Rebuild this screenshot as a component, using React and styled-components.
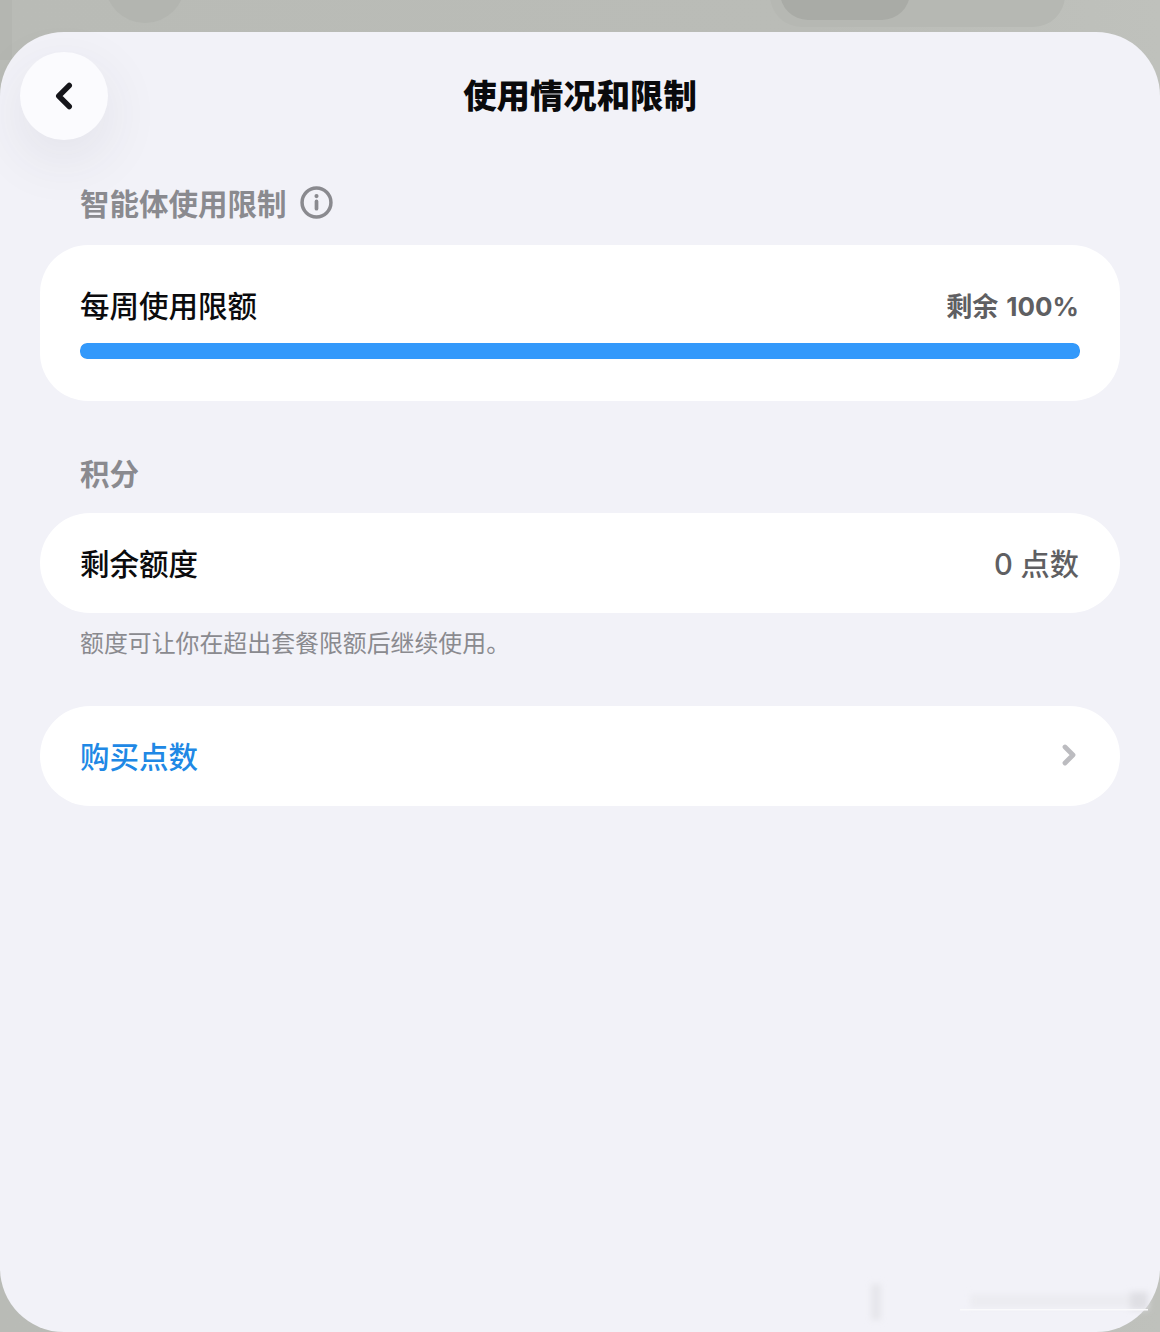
import React from "react";
import styled, { createGlobalStyle } from "styled-components";
import { ChevronLeft, ChevronRight } from "lucide-react";

const Global = createGlobalStyle`
  html, body { margin: 0; padding: 0; background: #bbbdb8; }
  * { box-sizing: border-box; }
  body { font-family: Inter, "Noto Sans CJK SC", sans-serif; }
`;

const Page = styled.div`
  position: relative;
  width: 1160px;
  height: 1332px;
  padding-top: 32px;
  overflow: hidden;
  background: linear-gradient(90deg, #b9bbb6 0%, #babcb7 70%, #bfc1bc 100%);
`;

const Backdrop = styled.svg`
  position: absolute;
  inset: 0 0 auto 0;
  width: 1160px;
  height: 60px;
`;

const Sheet = styled.main`
  position: relative;
  height: 1300px;
  background: #f2f2f8;
  border-radius: 64px;
  padding: 20px 40px 0 20px;
  display: flex;
  flex-direction: column;
`;

const Header = styled.header`
  display: grid;
  grid-template-columns: 88px 1fr 68px;
  align-items: center;
  height: 88px;
  margin-bottom: 42px;
`;

const BackButton = styled.button`
  width: 88px;
  height: 88px;
  padding: 0;
  border: 0;
  border-radius: 50%;
  background: #fbfbfe;
  color: #15151a;
  display: flex;
  align-items: center;
  justify-content: center;
  box-shadow: 0 18px 60px rgba(60, 60, 80, 0.09);
`;

const Title = styled.h1`
  margin: 0;
  text-align: center;
  font-size: 33.4px;
  line-height: 44px;
  font-weight: 800;
  color: #0a0a0c;
`;

const Content = styled.div`
  margin-left: 20px;
  display: flex;
  flex-direction: column;
`;

const SectionLabel = styled.div`
  display: flex;
  align-items: center;
  gap: 13px;
  height: 40px;
  padding-left: 40px;
  font-size: 29.5px;
  font-weight: 700;
  color: #8a8a8f;
  margin-bottom: ${(p) => p.$mb}px;
`;

const InfoIcon = styled.svg`
  width: 33px;
  height: 33px;
  flex: none;
`;

const Card = styled.section`
  background: #fff;
  border-radius: 48px;
`;

const UsageCard = styled(Card)`
  height: 156px;
  padding: 39px 40px 0;
  margin-bottom: 51px;
`;

const UsageHead = styled.div`
  display: flex;
  justify-content: space-between;
  align-items: center;
  height: 40px;
  margin-bottom: 19px;
`;

const RowLabel = styled.span`
  font-size: 29.5px;
  font-weight: 500;
  color: ${(p) => p.$c};
`;

const Remaining = styled.span`
  font-size: 26px;
  font-weight: 700;
  color: #5f5f62;
  word-spacing: 2px;
  margin-right: 1px;
`;

const Track = styled.div`
  height: 16px;
  border-radius: 7px;
  background: #e6e6ec;
  overflow: hidden;
`;

const Fill = styled.div`
  height: 100%;
  border-radius: 7px;
  background: #3399fb;
`;

const Row = styled(Card)`
  height: 100px;
  padding: 0 40px 2px;
  border-radius: 50px;
  display: flex;
  align-items: center;
  justify-content: space-between;
`;

const Points = styled.span`
  font-size: 29.2px;
  font-weight: 500;
  color: #5f5f62;
  margin-right: 1px;
`;

const Note = styled.p`
  margin: 14px 0 45px;
  padding-left: 40px;
  font-size: 23.9px;
  line-height: 34px;
  color: #8a8a8f;
`;

const Chevron = styled(ChevronRight)`
  margin-right: -5px;
  color: #bcbcc0;
`;

const ScreenFlaw = styled.svg`
  position: absolute;
  left: 0;
  top: 0;
  width: 1160px;
  height: 1300px;
  pointer-events: none;
`;

export default function App() {
  return (
    <Page>
      <Global />
      <Backdrop viewBox="0 0 1160 60">
        <rect x="-68" y="-60" width="80" height="160" rx="40" fill="#b4b6b1" />
        <rect x="105" y="-57" width="80" height="80" rx="40" fill="#b3b5b0" />
        <rect x="770" y="-40" width="295" height="67" rx="32" fill="#b6b8b3" />
        <rect x="780" y="-50" width="130" height="70" rx="28" fill="#a9aba6" />
      </Backdrop>
      <Sheet>
        <Header>
          <BackButton aria-label="返回">
            <ChevronLeft size={42} strokeWidth={3.1} />
          </BackButton>
          <Title>使用情况和限制</Title>
        </Header>
        <Content>
          <SectionLabel $mb={23}>
            智能体使用限制
            <InfoIcon viewBox="0 0 32 32" fill="none" stroke="currentColor" strokeLinecap="round">
              <circle cx="16" cy="16" r="14" strokeWidth="3.4" />
              <path d="M16 15v7" strokeWidth="3.6" />
              <circle cx="16" cy="9.8" r="2" fill="currentColor" stroke="none" />
            </InfoIcon>
          </SectionLabel>
          <UsageCard>
            <UsageHead>
              <RowLabel $c="#0b0b0d">每周使用限额</RowLabel>
              <Remaining>剩余 100%</Remaining>
            </UsageHead>
            <Track>
              <Fill style={{ width: "100%" }} />
            </Track>
          </UsageCard>
          <SectionLabel $mb={21}>积分</SectionLabel>
          <Row>
            <RowLabel $c="#0b0b0d">剩余额度</RowLabel>
            <Points>0 点数</Points>
          </Row>
          <Note>额度可让你在超出套餐限额后继续使用。</Note>
          <Row>
            <RowLabel $c="#2088e5">购买点数</RowLabel>
            <Chevron size={32} strokeWidth={3.6} />
          </Row>
        </Content>
        <ScreenFlaw viewBox="0 0 1160 1300">
          <defs>
            <filter id="soft" x="-30%" y="-100%" width="160%" height="300%">
              <feGaussianBlur stdDeviation="3" />
            </filter>
          </defs>
          <g filter="url(#soft)">
            <rect x="871" y="1252" width="10" height="36" fill="#e6e6eb" />
            <rect x="970" y="1262" width="170" height="14" fill="#ececf1" />
            <rect x="1130" y="1260" width="18" height="18" fill="#dfdfe4" />
          </g>
          <rect x="960" y="1277" width="188" height="1.5" fill="#fafafc" />
        </ScreenFlaw>
      </Sheet>
    </Page>
  );
}
